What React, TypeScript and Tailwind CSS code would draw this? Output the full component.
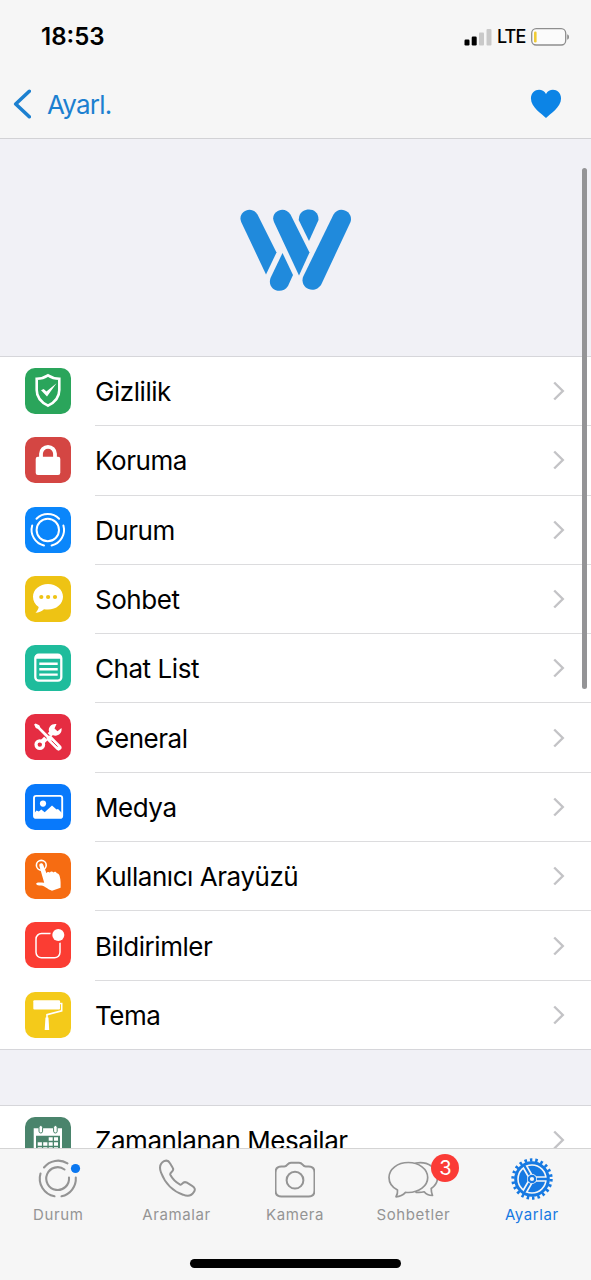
import type { ReactNode } from "react";

type Row = { label: string; color: string; icon: ReactNode };

const rows: Row[] = [
  {
    label: "Gizlilik",
    color: "bg-[#2aa55b]",
    icon: (
      <>
        <path d="M23 7.3c3.6 2.4 7.2 3.3 11.3 3.4V22c0 7-4.3 12.3-11.3 15.7C16 34.3 11.7 29 11.7 22V10.7C15.8 10.600 19.4 9.7 23 7.300z" fill="none" stroke="white" strokeWidth="2.6" />
        <path d="M16 22.300l2.700-1.300 2.700 2.600L31.500 15.300 22 28.500z" fill="white" />
      </>
    ),
  },
  {
    label: "Koruma",
    color: "bg-[#d44643]",
    icon: (
      <>
        <rect x="10.7" y="19.7" width="24.6" height="18.3" rx="2.2" fill="white" />
        <path d="M16 21v-4.2a7 7 0 0 1 14 0V21" fill="none" stroke="white" strokeWidth="3.8" />
      </>
    ),
  },
  {
    label: "Durum",
    color: "bg-[#0a86fb]",
    icon: (
      <g fill="none" stroke="white" strokeWidth="2" strokeLinecap="round">
        <circle cx="22.8" cy="23" r="11.2" />
        <path d="M11.5 11.7a16 16 0 0 1 22.6 0M7.2 18.5a16 16 0 0 0 11.8 20M38.400 18.5a16 16 0 0 1-11.8 20" />
      </g>
    ),
  },
  {
    label: "Sohbet",
    color: "bg-[#eec314]",
    icon: (
      <>
        <path d="M23 8c8.300 0 15 5.600 15 12.800s-6.700 12.800-15 12.800c-1.500 0-2.700-.1-4-.4-2.500 2.300-5.200 3.400-8.500 3.500 1.700-1.700 2.900-3.500 3.200-5.700C10 28.600 8 25 8 20.800 8 13.600 14.700 8 23 8z" fill="white" />
        <g fill="#eec314">
          <circle cx="16.3" cy="21" r="2.1" />
          <circle cx="23.1" cy="21" r="2.1" />
          <circle cx="30" cy="21" r="2.1" />
        </g>
      </>
    ),
  },
  {
    label: "Chat List",
    color: "bg-[#1fbc9c]",
    icon: (
      <>
        <rect x="10.3" y="9.7" width="26" height="26" rx="3.5" fill="none" stroke="white" strokeWidth="2.3" />
        <path d="M10 13.700V12q0-2.600 3-2.600h21q2.600 0 2.600 2.600v1.700z" fill="white" />
        <path d="M14.300 18.800h18.400M14.300 24.200h18.400M14.300 29.600h18.400" stroke="white" strokeWidth="2.4" />
      </>
    ),
  },
  {
    label: "General",
    color: "bg-[#e52d42]",
    icon: (
      <>
        <circle cx="14.8" cy="30.6" r="3.8" fill="none" stroke="white" strokeWidth="3.2" />
        <path d="M17.500 27.800L27.500 18" stroke="white" strokeWidth="5" />
        <path d="M31.500 10l-2 4.600 3 2.700 4-3.200c1 6-4.600 9-8.900 7l-3.600-3.600c-1.200-4.400 2.800-8.300 7.500-7.500z" fill="white" />
        <path d="M12 12l13 13" stroke="#e52d42" strokeWidth="5" />
        <path d="M10.600 9.400l3.700 1.800 1 2.200L26.400 24.400 24.400 26.400 13 15.100l-2.200-1.100-1.700-3.400z" fill="white" />
        <path d="M24.700 24.700l8.800 8.800" stroke="white" strokeWidth="6" strokeLinecap="round" />
        <path d="M26.500 26.600l6 6" stroke="#e52d42" strokeWidth="1" />
      </>
    ),
  },
  {
    label: "Medya",
    color: "bg-[#0879fb]",
    icon: (
      <>
        <rect x="9" y="11.900" width="28.2" height="22" rx="2.2" fill="none" stroke="white" strokeWidth="1.9" />
        <circle cx="18" cy="19.6" r="3.1" fill="white" />
        <path d="M9 29.500l2.500-3 2.300 1 2.500-2 3.400 2.800 7.300-6.700 4.500 4 1.500-.6L37 29v5H9z" fill="white" />
      </>
    ),
  },
  {
    label: "Kullanıcı Arayüzü",
    color: "bg-[#f66c12]",
    icon: (
      <>
        <circle cx="16.3" cy="12.3" r="4.9" fill="none" stroke="white" strokeWidth="1.6" />
        <path d="M14.300 12.700c-.3-2.500 2.900-3.200 3.800-1.200L21.500 20.300c.6-1.400 2.300-1.600 3.300-.7.700-1.500 2.800-1.600 3.600-.2 1.200-1.200 3-.6 3.500.9 1.600.1 2.300 1.300 2.800 3 1.200 4 .9 8 .9 11.500l-8.600 3c-4.500-1.300-7-4.700-10.700-5.200-2.800-.1-4.600-.4-5.200-1.900.5-1.600 3.400-1.500 8.100-.9z" fill="white" />
      </>
    ),
  },
  {
    label: "Bildirimler",
    color: "bg-[#fb3d33]",
    icon: (
      <>
        <rect x="11" y="11.5" width="24" height="24.3" rx="5.5" fill="none" stroke="white" strokeWidth="1.5" />
        <circle cx="33.3" cy="13" r="8" fill="#fb3d33" />
        <circle cx="33.3" cy="13" r="6" fill="white" />
      </>
    ),
  },
  {
    label: "Tema",
    color: "bg-[#f4ca1a]",
    icon: (
      <>
        <rect x="8.3" y="8.2" width="26.7" height="9.3" rx="1" fill="white" />
        <path d="M35 11.500h1.700v7.300L22 22.700v5" fill="none" stroke="white" strokeWidth="1.6" />
        <path d="M20.500 25.500h3l.7 12.500h-4.500z" fill="white" />
      </>
    ),
  },
];

const scheduled: Row = {
  label: "Zamanlanan Mesailar",
  color: "bg-[#4a846c]",
  icon: (
    <>
      <path d="M8.700 11.300H37V42H8.700z" fill="white" />
      <path d="M11 18.700h24V40H11z" fill="#4a846c" />
      <rect x="14" y="8.5" width="3.6" height="7.5" rx="1.8" fill="white" stroke="#4a846c" />
      <rect x="28.6" y="8.5" width="3.6" height="7.500" rx="1.8" fill="white" stroke="#4a846c" />
      <path d="M23.700 20.300h4v3.500h-4zM29 20.300h4v3.500h-4zM12.700 25.200h4.200v3.600h-4.200zM18.200 25.200h4.200v3.600h-4.200zM23.700 25.200h4v3.600h-4zM29 25.200h4v3.600h-4zM12.700 30.200h4.200v3.600h-4.200zM18.200 30.200h4.200v3.600h-4.200zM23.700 30.200h4v3.600h-4zM29 30.200h4v3.600h-4z" fill="white" />
    </>
  ),
};

function SettingsRow({ row, last }: { row: Row; last?: boolean }) {
  return (
    <li className="flex h-[69.3px] shrink-0 items-stretch pl-[25px]">
      <div className={`mt-[11px] h-[46px] w-[46px] shrink-0 overflow-hidden rounded-[10px] ${row.color}`}>
        <svg viewBox="0 0 46 46" className="h-full w-full">
          {row.icon}
        </svg>
      </div>
      <div className={`ml-6 flex flex-1 items-center justify-between border-b pr-[26px] ${last ? "border-transparent" : "border-[#dcdcde]"}`}>
        <span className="pt-[2px] text-[26px] leading-8 tracking-[-0.45px] whitespace-nowrap">{row.label}</span>
        <svg viewBox="0 0 12 20" className="h-5 w-3 fill-none stroke-[#c3c3c6]" strokeWidth="2.4">
          <path d="M1.200 1.500L9.800 10l-8.600 8.500" />
        </svg>
      </div>
    </li>
  );
}

function StatusBar() {
  return (
    <div className="flex h-[73px] items-center justify-between pr-[21px] pl-[41px]">
      <span className="text-[24px] font-semibold">18:53</span>
      <div className="flex items-center">
        <svg viewBox="0 0 28 18" className="h-[18px] w-7">
          <rect x="0.5" y="11.500" width="5" height="6" rx="1.2" />
          <rect x="7.7" y="8.500" width="5" height="9" rx="1.2" />
          <rect x="15" y="4.500" width="5" height="13" rx="1" fill="#c9c9c9" />
          <rect x="22.5" y="1" width="5" height="16.5" rx="1" fill="#c9c9c9" />
        </svg>
        <span className="ml-[5px] w-[28px] text-[18px] font-medium tracking-[-0.9px]">LTE</span>
        <svg viewBox="0 0 39 18" className="ml-[6px] h-[18px] w-[39px]">
          <rect x="0.7" y="0.7" width="34" height="16.3" rx="4.5" fill="#fbfbfb" stroke="#8e8e8e" strokeWidth="1.3" />
          <rect x="3" y="3.5" width="2.6" height="11" rx="1.2" fill="#f0cb35" />
          <path d="M36.200 6.200c2.400.6 2.400 4.900 0 5.500z" fill="#8e8e8e" />
        </svg>
      </div>
    </div>
  );
}

function NavBar() {
  return (
    <div className="flex h-[62px] items-center justify-between pr-[29px] pl-[13px]">
      <button className="flex items-center text-[#1c80d0]">
        <svg viewBox="0 0 18 30" className="h-[30px] w-[18px] fill-none stroke-current" strokeWidth="3.6" strokeLinecap="round" strokeLinejoin="round">
          <path d="M16.300 2.300L2.700 15l13.600 12.700" />
        </svg>
        <span className="ml-4 text-[26px] tracking-[-0.8px]">Ayarl.</span>
      </button>
      <svg viewBox="0 0 34 30" className="h-[30px] w-[32px] fill-[#0c84e6]" preserveAspectRatio="none">
        <path d="M17 29C13 25 1 18.500 1 9.500 1 0 13-2 17 5c4-7 16-5 16 4.500C33 18.500 21 25 17 29z" />
      </svg>
    </div>
  );
}

function Logo() {
  return (
    <svg viewBox="0 0 112 84" className="h-[84px] w-[112px] fill-[#208adc]">
      <path d="M1.200 14C-3 3.500 11.500-3.500 17.500 6.500l19 38-10.500 22z" />
      <path d="M34 14C29.500 3.500 44.500-3.500 50.500 6.500l19 38-10.500 23z" />
      <path d="M59.200 8.500C61.500-1 79-1.500 78.500 12L69 33 58.700 12z" />
      <path d="M42.500 45l10.500 22-5 11C42 87.500 26.500 82 30.500 70z" />
      <path d="M93.500 6.500c5.500-10 20.500-3 17 7.500L81.500 76c-6 11-22 5-18.500-7z" />
    </svg>
  );
}

function Tab({ label, active, children, badge }: { label: string; active?: boolean; children: ReactNode; badge?: string }) {
  return (
    <button className={`flex flex-1 flex-col items-center pt-[10px] ${active ? "text-[#1679e2]" : "text-[#949494]"}`}>
      <span className="relative flex h-10">
        {children}
        {badge && (
          <span className="absolute -top-[5px] left-[43px] flex size-7 items-center justify-center rounded-full bg-[#fb3b36] text-[20px] text-white">
            {badge}
          </span>
        )}
      </span>
      <span className="mt-[5px] text-[15px] leading-[22px] tracking-[0.6px]">{label}</span>
    </button>
  );
}

function TabBar() {
  return (
    <nav className="flex h-[132px] shrink-0 flex-col border-t border-[#d4d4d4] bg-[#f6f6f6]">
      <div className="-ml-px flex flex-1 items-start">
        <Tab label="Durum">
          <svg viewBox="0 0 40 40" className="size-10 overflow-visible fill-none stroke-current" strokeWidth="2.1" strokeLinecap="round">
            <path d="M26.500 10.500A11.400 11.400 0 1 0 31 18.500" />
            <path d="M6 8.500A18 18 0 0 1 29.500 4.300M2.500 14.500A18 18 0 0 0 16.500 37.300M37.800 18.500A18 18 0 0 1 23.500 37.300" />
            <circle cx="37.5" cy="9.5" r="4.600" className="fill-[#0a77f0] stroke-none" />
          </svg>
        </Tab>
        <Tab label="Aramalar">
          <svg viewBox="0 0 40 40" className="size-10 fill-none stroke-current" strokeWidth="2">
            <path d="M7 2.200c2.300-1 4.600-.6 6 2l2.700 4.600c2.500 3.300-3.500 4.700-2.400 7 2.200 4.300 5.500 7.500 9.800 9.800 2.300 1.100 2.200-4 6.500-2.100l5.900 3.700c2.400 1.400 3 3.600 1.500 5.600-2.500 4.300-7 4.600-11 2.900C15.500 32 8 24 4 13.500 2.300 9 3 4.500 7 2.200z" />
          </svg>
        </Tab>
        <Tab label="Kamera">
          <svg viewBox="0 0 40 40" className="size-10 fill-none stroke-current" strokeWidth="2">
            <path d="M6.500 7.500h2.800c3.500 0 2.700-3.800 6.700-3.800h8c4 0 3.200 3.800 6.700 3.800h2.800q6 0 6 6v18q0 6-6 6h-27q-6 0-6-6v-18q0-6 6-6z" />
            <circle cx="20" cy="21.2" r="8.4" />
          </svg>
        </Tab>
        <Tab label="Sohbetler" badge="3">
          <svg viewBox="0 0 50 40" className="h-10 w-[50px] stroke-current" strokeWidth="1.7" strokeLinejoin="round">
            <path d="M28 4c12-2 21.500 5 21.500 14.500 0 5-2.500 8.500-6.300 11 0 3 .5 5 1.300 7-3.800 0-6.500-1.200-8.300-3.700-3 .8-5.500.8-8.200.5z" fill="none" />
            <path d="M20.300 3.500C31 3.500 39.700 10 39.700 18.500S31 33.500 20.300 33.500q-1.300 0-2.800-.2c-2.300 2.500-5.500 4.200-9.500 4.500 1.300-2.200 1.800-4.200 1.500-6.700C4.200 28.300 1 24 1 18.500 1 10 9.600 3.500 20.300 3.500z" fill="#f6f6f6" />
          </svg>
        </Tab>
        <Tab label="Ayarlar" active>
          <svg viewBox="0 0 42 42" className="-mt-px h-[42px] w-[42px] fill-none stroke-current">
            <circle cx="21" cy="21" r="19" strokeWidth="3.4" strokeDasharray="2.5 2.926" />
            <circle cx="21" cy="21" r="16.3" strokeWidth="3" />
            <circle cx="21" cy="21" r="13.2" className="fill-current stroke-none" />
            <path d="M21 21h14M21 21L14 9M21 21L14 33" stroke="#f6f6f6" strokeWidth="5.5" />
            <path d="M21 21h15M21 21L13.500 8M21 21L13.500 34" strokeWidth="2.3" />
            <circle cx="21" cy="21" r="5" fill="#f6f6f6" stroke="none" />
            <circle cx="21" cy="21" r="3.2" fill="#f6f6f6" strokeWidth="2.2" />
          </svg>
        </Tab>
      </div>
      <div className="mb-3 h-[9px] w-[211px] self-center rounded-full bg-black" />
    </nav>
  );
}

export default function App() {
  return (
    <div className="relative flex h-[1280px] w-[591px] flex-col overflow-hidden bg-[#f1f1f6] font-['Inter',sans-serif] text-black">
      <header className="h-[139px] shrink-0 border-b border-[#d2d2d5] bg-[#f6f6f6]">
        <StatusBar />
        <NavBar />
      </header>
      <main className="flex min-h-0 flex-1 flex-col overflow-hidden">
        <div className="flex h-[217px] shrink-0 justify-center pt-[69px]">
          <Logo />
        </div>
        <ul className="h-[694px] shrink-0 border-y border-[#d6d6da] bg-white">
          {rows.map((row, i) => (
            <SettingsRow key={row.label} row={row} last={i === rows.length - 1} />
          ))}
        </ul>
        <ul className="mt-[55px] shrink-0 border-t border-[#d6d6da] bg-white">
          <SettingsRow row={scheduled} />
        </ul>
      </main>
      <TabBar />
      <div className="absolute top-[168px] right-1 h-[521px] w-[5px] rounded-full bg-[#949496]" />
    </div>
  );
}
